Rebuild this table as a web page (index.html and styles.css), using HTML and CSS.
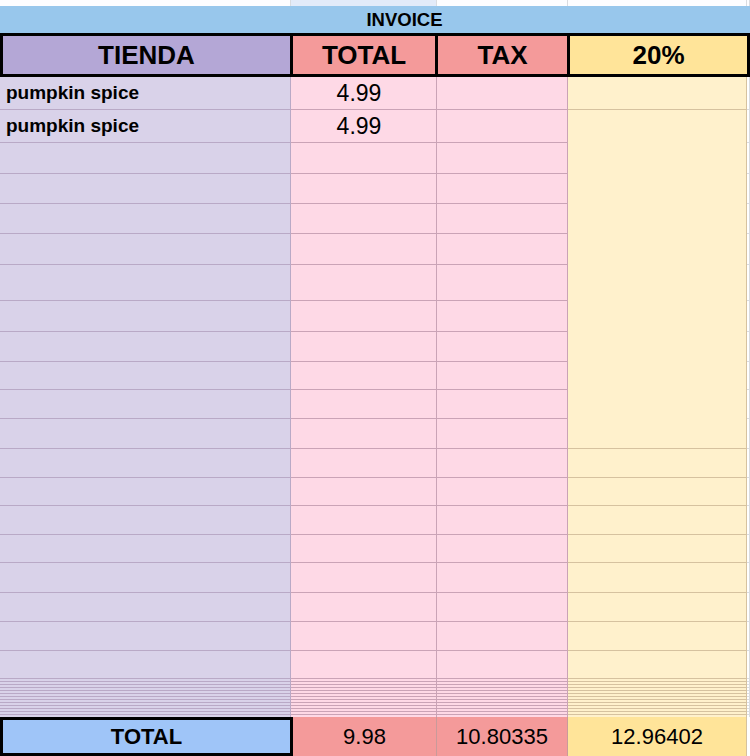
FILE: index.html
```html
<!DOCTYPE html>
<html>
<head>
<meta charset="utf-8">
<link rel="stylesheet" href="styles.css">
</head>
<body>
<div class="sheet">
  <div class="strip">
    <div class="s"></div><div class="s sel"></div><div class="s"></div><div class="s"></div><div class="s"></div>
  </div>
  <div class="band"><span>INVOICE</span></div>
  <div class="head">
    <div class="h purple">TIENDA</div>
    <div class="h red">TOTAL</div>
    <div class="h red">TAX</div>
    <div class="h yellow">20%</div>
  </div>
  <div class="body">
    <div class="c a name">pumpkin spice</div><div class="c b num">4.99</div><div class="c b"></div><div class="c d"></div><div class="c e"></div>
    <div class="c a name">pumpkin spice</div><div class="c b num">4.99</div><div class="c b"></div><div class="c d merged"></div><div class="c e"></div>
    <div class="c a"></div><div class="c b"></div><div class="c b"></div><div class="c e"></div>
    <div class="c a"></div><div class="c b"></div><div class="c b"></div><div class="c e"></div>
    <div class="c a"></div><div class="c b"></div><div class="c b"></div><div class="c e"></div>
    <div class="c a"></div><div class="c b"></div><div class="c b"></div><div class="c e"></div>
    <div class="c a"></div><div class="c b"></div><div class="c b"></div><div class="c e"></div>
    <div class="c a"></div><div class="c b"></div><div class="c b"></div><div class="c e"></div>
    <div class="c a"></div><div class="c b"></div><div class="c b"></div><div class="c e"></div>
    <div class="c a"></div><div class="c b"></div><div class="c b"></div><div class="c e"></div>
    <div class="c a"></div><div class="c b"></div><div class="c b"></div><div class="c e"></div>
    <div class="c a"></div><div class="c b"></div><div class="c b"></div><div class="c e"></div>
    <div class="c a"></div><div class="c b"></div><div class="c b"></div><div class="c d"></div><div class="c e"></div>
    <div class="c a"></div><div class="c b"></div><div class="c b"></div><div class="c d"></div><div class="c e"></div>
    <div class="c a"></div><div class="c b"></div><div class="c b"></div><div class="c d"></div><div class="c e"></div>
    <div class="c a"></div><div class="c b"></div><div class="c b"></div><div class="c d"></div><div class="c e"></div>
    <div class="c a"></div><div class="c b"></div><div class="c b"></div><div class="c d"></div><div class="c e"></div>
    <div class="c a"></div><div class="c b"></div><div class="c b"></div><div class="c d"></div><div class="c e"></div>
    <div class="c a"></div><div class="c b"></div><div class="c b"></div><div class="c d"></div><div class="c e"></div>
    <div class="c a"></div><div class="c b"></div><div class="c b"></div><div class="c d"></div><div class="c e"></div>
  </div>
  <div class="collapsed">
    <div class="c a"></div><div class="c b"></div><div class="c b"></div><div class="c d"></div><div class="c e"></div>
  </div>
  <div class="totals">
    <div class="t label">TOTAL</div>
    <div class="t red">9.98</div>
    <div class="t red">10.80335</div>
    <div class="t yellow">12.96402</div>
    <div class="t blank"></div>
  </div>
</div>
</body>
</html>
```
FILE: styles.css
```css
* { box-sizing: border-box; }
html, body { margin: 0; padding: 0; background: #ffffff; }
body { font-family: "Liberation Sans", Arial, sans-serif; color: #000; }

.sheet { width: 750px; }

.strip {
  display: grid;
  grid-template-columns: 291px 146px 131px 179px 3px;
  height: 6px;
}
.strip .s { border-right: 1px solid #dadce0; background: #fdfdff; }
.strip .sel { background: #e3ebf9; }

.band {
  height: 27px;
  background: #98c7ec;
  padding-left: 59px;
  display: flex;
  align-items: center;
  justify-content: center;
  font-weight: bold;
  font-size: 18.5px;
}

.head {
  display: grid;
  grid-template-columns: 287px 142px 129px 177px;
  gap: 3px;
  padding: 3px;
  background: #000;
  height: 44px;
}
.h {
  display: flex;
  align-items: center;
  justify-content: center;
  font-weight: bold;
  font-size: 26px;
}
.purple { background: #b4a7d6; }
.red { background: #f49a9a; }
.yellow { background: #ffe499; }

.body {
  display: grid;
  grid-template-columns: 291px 146px 131px 179px 3px;
  grid-template-rows: 33px 33px 31px 30px 30px 31px 36px 31px 30px 28px 29px 30px 29px 28px 29px 28px 30px 29px 29px 28px;
}
.c { border-right: 1px solid; border-bottom: 1px solid; }
.a { background: #d9d2e9; border-color: #b9a9c6; }
.b { background: #fed9e6; border-color: #caa3b6; }
.d { background: #fff1cc; border-color: #d6c29f; }
.e { background: #ffffff; border-color: #dadce0; }
.merged { grid-row: span 11; }

.name {
  display: flex;
  align-items: center;
  padding-left: 6px;
  font-weight: bold;
  font-size: 19px;
}
.num {
  display: flex;
  align-items: center;
  justify-content: center;
  padding-right: 9px;
  font-size: 23px;
}

.collapsed {
  display: grid;
  grid-template-columns: 291px 146px 131px 179px 3px;
  height: 38px;
}
.collapsed .c { border-bottom: none; }
.collapsed .a { background: repeating-linear-gradient(to bottom, #d9d2e9 0 2px, #b9a9c6 2px 3px); }
.collapsed .b { background: repeating-linear-gradient(to bottom, #fed9e6 0 2px, #caa3b6 2px 3px); }
.collapsed .d { background: repeating-linear-gradient(to bottom, #fff1cc 0 2px, #d6c29f 2px 3px); }
.collapsed .e { background: repeating-linear-gradient(to bottom, #ffffff 0 2px, #dadce0 2px 3px); }

.totals {
  display: grid;
  grid-template-columns: 293px 144px 131px 179px 3px;
  height: 39px;
}
.t {
  display: flex;
  align-items: center;
  justify-content: center;
  font-size: 22px;
  border-right: 1px solid #c99a9a;
}
.t.yellow { border-right-color: #d6c29f; }
.t.label {
  background: #9fc5f8;
  border: 3px solid #000;
  font-weight: bold;
  font-size: 22px;
}
.t.blank { background: #fff; border-right: none; }
```
